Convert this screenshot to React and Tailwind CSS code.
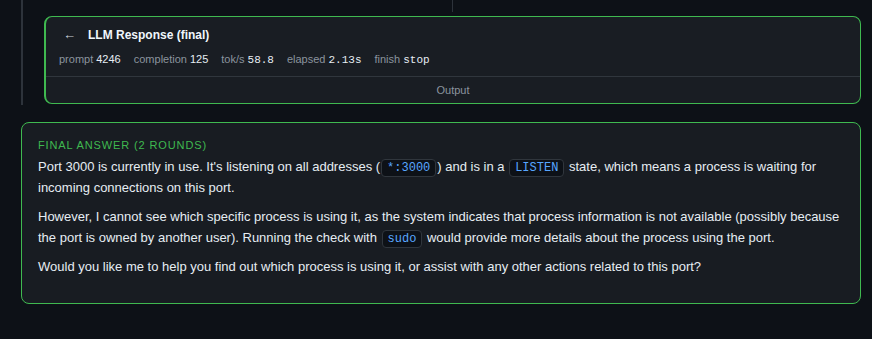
const sans = { fontFamily: '"Liberation Sans", Arial, sans-serif' };

function Stat({ label, value, mono }) {
  return (
    <span className="flex items-baseline gap-[3px]">
      <span className="text-[#8b949e]">{label}</span>
      <span
        className={mono ? 'font-["Liberation_Mono",monospace] text-[#e6edf3]' : 'text-[#e6edf3]'}
      >
        {value}
      </span>
    </span>
  );
}

function Code({ children }) {
  return (
    <code className='mx-px inline-block rounded-[4px] border border-[#30363d] bg-[#0d1117] px-[5px] font-["Liberation_Mono",monospace] text-[12px] leading-[16px] text-[#58a6ff]'>
      {children}
    </code>
  );
}

export default function App() {
  return (
    <div
      className="flex h-[339px] w-full flex-col overflow-hidden bg-[#0d1117] pl-[21px] pr-[11px]"
      style={sans}
    >
      <div className="flex flex-col border-l-2 border-[#2d333b] pb-px">
        <div className="h-3 w-[430px] border-r border-[#2d333b]" />
        <div className="ml-[21px] mt-1 flex h-[88px] flex-col rounded-lg border border-l-2 border-[#3fb950] bg-[#191d23]">
          <div className="flex items-center gap-3 pl-[17px] pt-[10px] text-[12px] leading-[16px]">
            <span className="text-[13px] text-[#c9d1d9]">←</span>
            <span className="font-bold text-[#f0f6fc]">LLM Response (final)</span>
          </div>
          <div className="flex items-baseline gap-[13px] pl-[13px] pt-2 text-[11px] leading-[16px]">
            <Stat label="prompt" value="4246" />
            <Stat label="completion" value="125" />
            <Stat label="tok/s" value="58.8" mono />
            <Stat label="elapsed" value="2.13s" mono />
            <Stat label="finish" value="stop" mono />
          </div>
          <div className="mt-[8px] border-t border-[#30363d]" />
          <div className="flex flex-1 items-center justify-center pt-px text-[11px] text-[#8b949e]">
            Output
          </div>
        </div>
      </div>

      <div className="mt-[17px] flex h-[182px] flex-col rounded-lg border border-[#3fb950] bg-[#181c22] px-4 pt-[14px]">
        <div className="text-[11px] uppercase leading-[16px] tracking-[0.08em] text-[#3fb950]">
          Final Answer (2 rounds)
        </div>
        <div className="mt-[3px] text-[13px] leading-[21px] text-[#e6edf3]">
          <p className="mb-2">
            Port 3000 is currently in use. It's listening on all addresses (<Code>*:3000</Code>) and is in a{' '}
            <Code>LISTEN</Code> state, which means a process is waiting for incoming connections on this port.
          </p>
          <p className="mb-2">
            However, I cannot see which specific process is using it, as the system indicates that process
            information is not available (possibly because the port is owned by another user). Running the check
            with <Code>sudo</Code> would provide more details about the process using the port.
          </p>
          <p>
            Would you like me to help you find out which process is using it, or assist with any other actions
            related to this port?
          </p>
        </div>
      </div>
    </div>
  );
}
